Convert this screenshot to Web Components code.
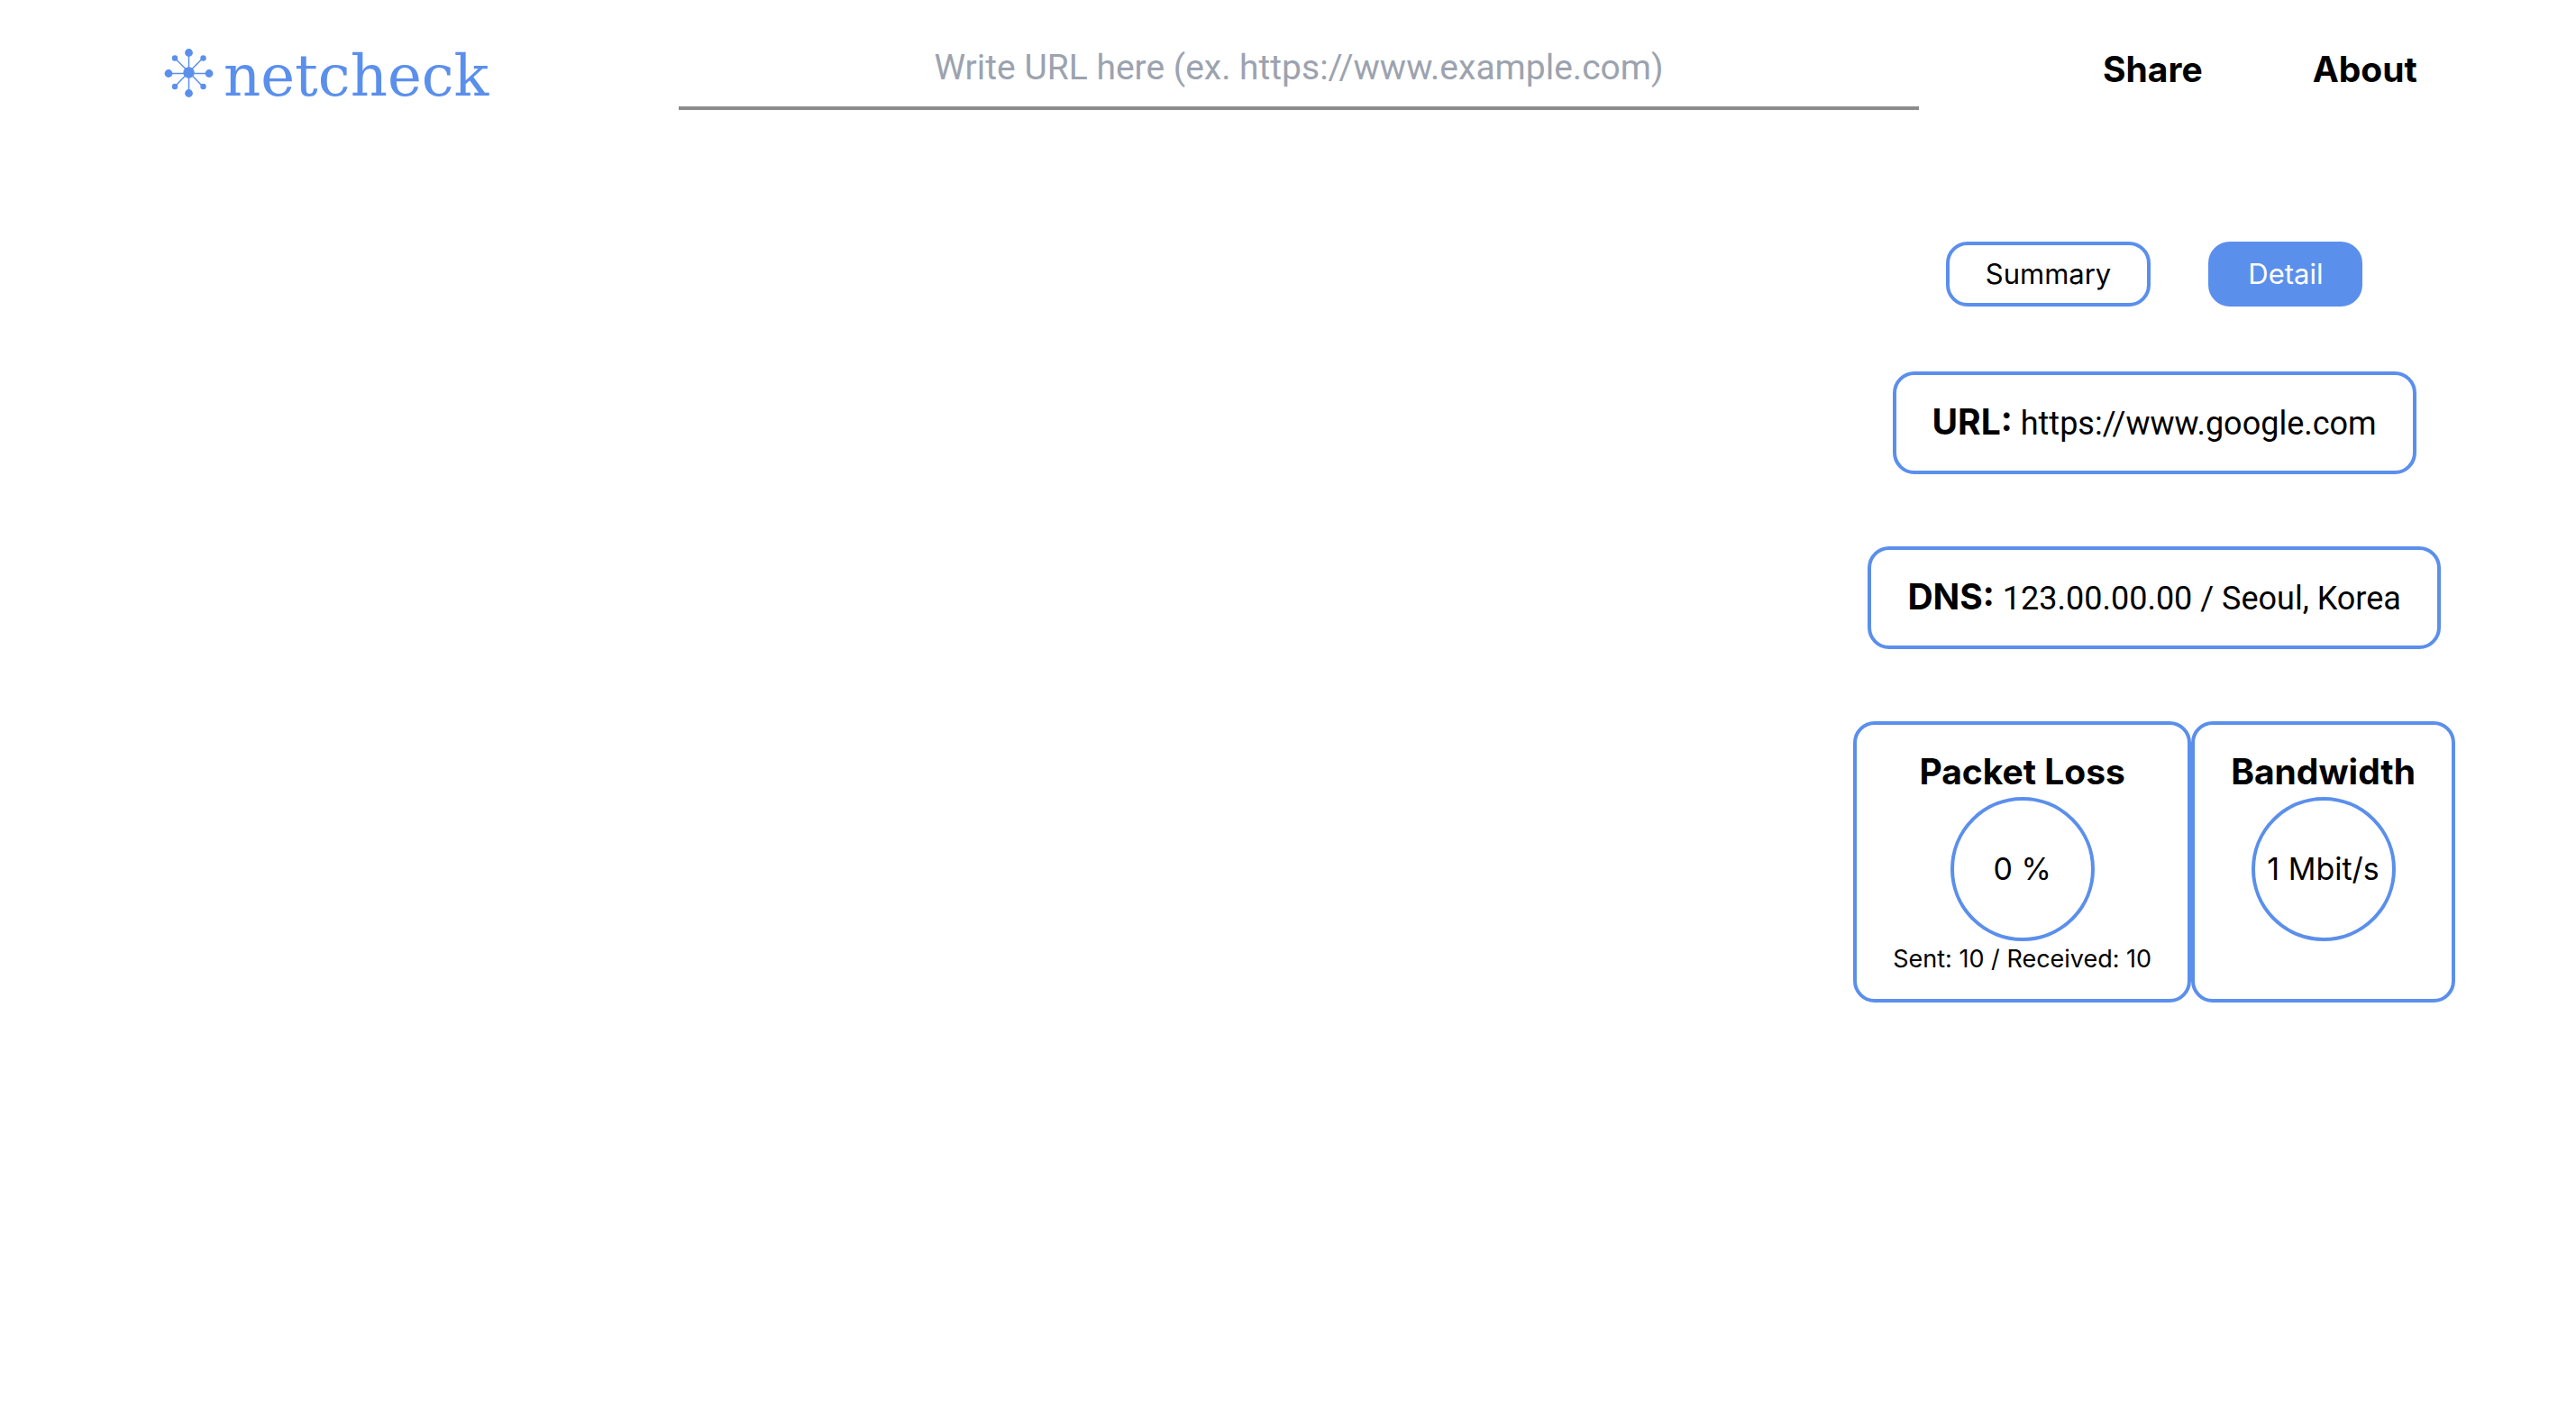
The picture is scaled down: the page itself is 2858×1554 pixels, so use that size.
<!DOCTYPE html>
<html lang="en">
<head>
<meta charset="utf-8">
<title>netcheck</title>
<style>
  :root { --brand: #5b8fec; --rule: #8c8c8c; --hint: #9ca3af; --text: Roboto, "Liberation Sans", sans-serif; --ui: Inter, "Liberation Sans", sans-serif; }
  body { margin: 0; background: #fff; color: #000; font-family: var(--ui); }
</style>
</head>
<body>
<net-app></net-app>

<template id="t-app">
  <style>
    :host { display: block; }
    header { display: grid; grid-template-columns: 753fr 1376fr 729fr; padding-top: 32px; }
    net-logo { margin-left: 182px; }
    nav { display: flex; align-items: center; gap: 122px; height: 90px; padding-left: 204px; }
    main { display: flex; justify-content: flex-end; padding: 138px 134px 48px; }
    section { display: flex; flex-direction: column; align-items: center; }
    .tabs { display: flex; gap: 64px; margin-bottom: 72px; }
    .rows { display: flex; flex-direction: column; align-items: center; gap: 80px; }
    .cards { display: flex; }
  </style>
  <header>
    <net-logo></net-logo>
    <url-field></url-field>
    <nav><nav-link>Share</nav-link><nav-link>About</nav-link></nav>
  </header>
  <main>
    <section>
      <div class="tabs"><tab-pill>Summary</tab-pill><tab-pill active>Detail</tab-pill></div>
      <div class="rows">
        <info-row><span slot="label">URL:</span>https://www.google.com</info-row>
        <info-row><span slot="label">DNS:</span>123.00.00.00 / Seoul, Korea</info-row>
        <div class="cards">
          <metric-card><span slot="title">Packet Loss</span>0 %<span slot="note">Sent: 10 / Received: 10</span></metric-card>
          <metric-card><span slot="title">Bandwidth</span>1 Mbit/s</metric-card>
        </div>
      </div>
    </section>
  </main>
</template>

<template id="t-logo">
  <style>
    :host { display: block; }
    a { display: flex; align-items: center; gap: 10px; height: 98px; color: var(--brand); text-decoration: none; }
    svg { width: 56px; height: 56px; flex: none; }
    span { padding-top: 6px; font: 64px/80px "DejaVu Serif", serif; }
  </style>
  <a href="#">
    <svg viewBox="0 0 56 56" fill="currentColor" stroke="currentColor" aria-hidden="true">
      <path d="M5 28.500H50M27.500 5V50M12 11.500L27.500 27L43 11.500M12 43L27.500 27L43 43" fill="none" stroke-width="1.500"/>
      <g stroke="none">
        <circle cx="27.500" cy="27.500" r="6.200"/>
        <circle cx="27.500" cy="5.500" r="4.400"/><circle cx="27.500" cy="50.500" r="4.400"/>
        <circle cx="5" cy="28.500" r="4.400"/><circle cx="50" cy="28.500" r="4.400"/>
        <circle cx="12" cy="11.500" r="3.200"/><circle cx="43.500" cy="11.500" r="3.200"/>
        <circle cx="12" cy="43" r="3.200"/><circle cx="43.500" cy="43" r="3.200"/>
      </g>
    </svg>
    <span>netcheck</span>
  </a>
</template>

<template id="t-field">
  <style>
    :host { display: block; }
    input { box-sizing: border-box; display: block; width: 100%; height: 90px; padding: 0; border: 0; border-bottom: 4px solid var(--rule);
      border-radius: 0; background: none; outline: none; font: 39px/56px var(--text); color: #000; text-align: center; }
    input::placeholder { color: var(--hint); opacity: 1; }
  </style>
  <input type="url" aria-label="URL" placeholder="Write URL here (ex. https://www.example.com)">
</template>

<template id="t-link">
  <style>
    :host { display: block; }
    a { color: inherit; text-decoration: none; font-size: 39px; line-height: 56px; font-weight: 700; }
  </style>
  <a href="#"><slot></slot></a>
</template>

<template id="t-pill">
  <style>
    :host { display: block; }
    button { display: block; margin: 0; padding: 8px 40px; border: 4px solid var(--brand); border-radius: 24px; background: #fff; color: #000;
      font: 31px/48px var(--ui); cursor: pointer; }
    :host([active]) button { background: var(--brand); color: #fff; }
  </style>
  <button type="button"><slot></slot></button>
</template>

<template id="t-row">
  <style>
    :host { display: block; padding: 24px 40px; border: 4px solid var(--brand); border-radius: 24px; font: 36px/56px var(--text); white-space: nowrap; }
    b { font-family: var(--ui); font-size: 39px; font-weight: 700; }
  </style>
  <b><slot name="label"></slot></b> <slot></slot>
</template>

<template id="t-card">
  <style>
    :host { display: flex; flex-direction: column; align-items: center; padding: 24px 40px; border: 4px solid var(--brand); border-radius: 24px; white-space: nowrap; }
    h2 { margin: 0; font-size: 39px; line-height: 56px; font-weight: 700; }
    .dial { box-sizing: border-box; display: flex; align-items: center; justify-content: center; width: 160px; height: 160px;
      border: 4px solid var(--brand); border-radius: 50%; font-size: 34px; line-height: 56px; }
    .note { font-size: 27px; line-height: 40px; }
  </style>
  <h2><slot name="title"></slot></h2>
  <div class="dial"><slot></slot></div>
  <div class="note"><slot name="note"></slot></div>
</template>

<script>
  const define = (name, templateId) => customElements.define(name, class extends HTMLElement {
    constructor() {
      super();
      this.attachShadow({ mode: "open" }).append(document.getElementById(templateId).content.cloneNode(true));
    }
  });
  define("net-logo", "t-logo");
  define("url-field", "t-field");
  define("nav-link", "t-link");
  define("tab-pill", "t-pill");
  define("info-row", "t-row");
  define("metric-card", "t-card");
  define("net-app", "t-app");
</script>
</body>
</html>
